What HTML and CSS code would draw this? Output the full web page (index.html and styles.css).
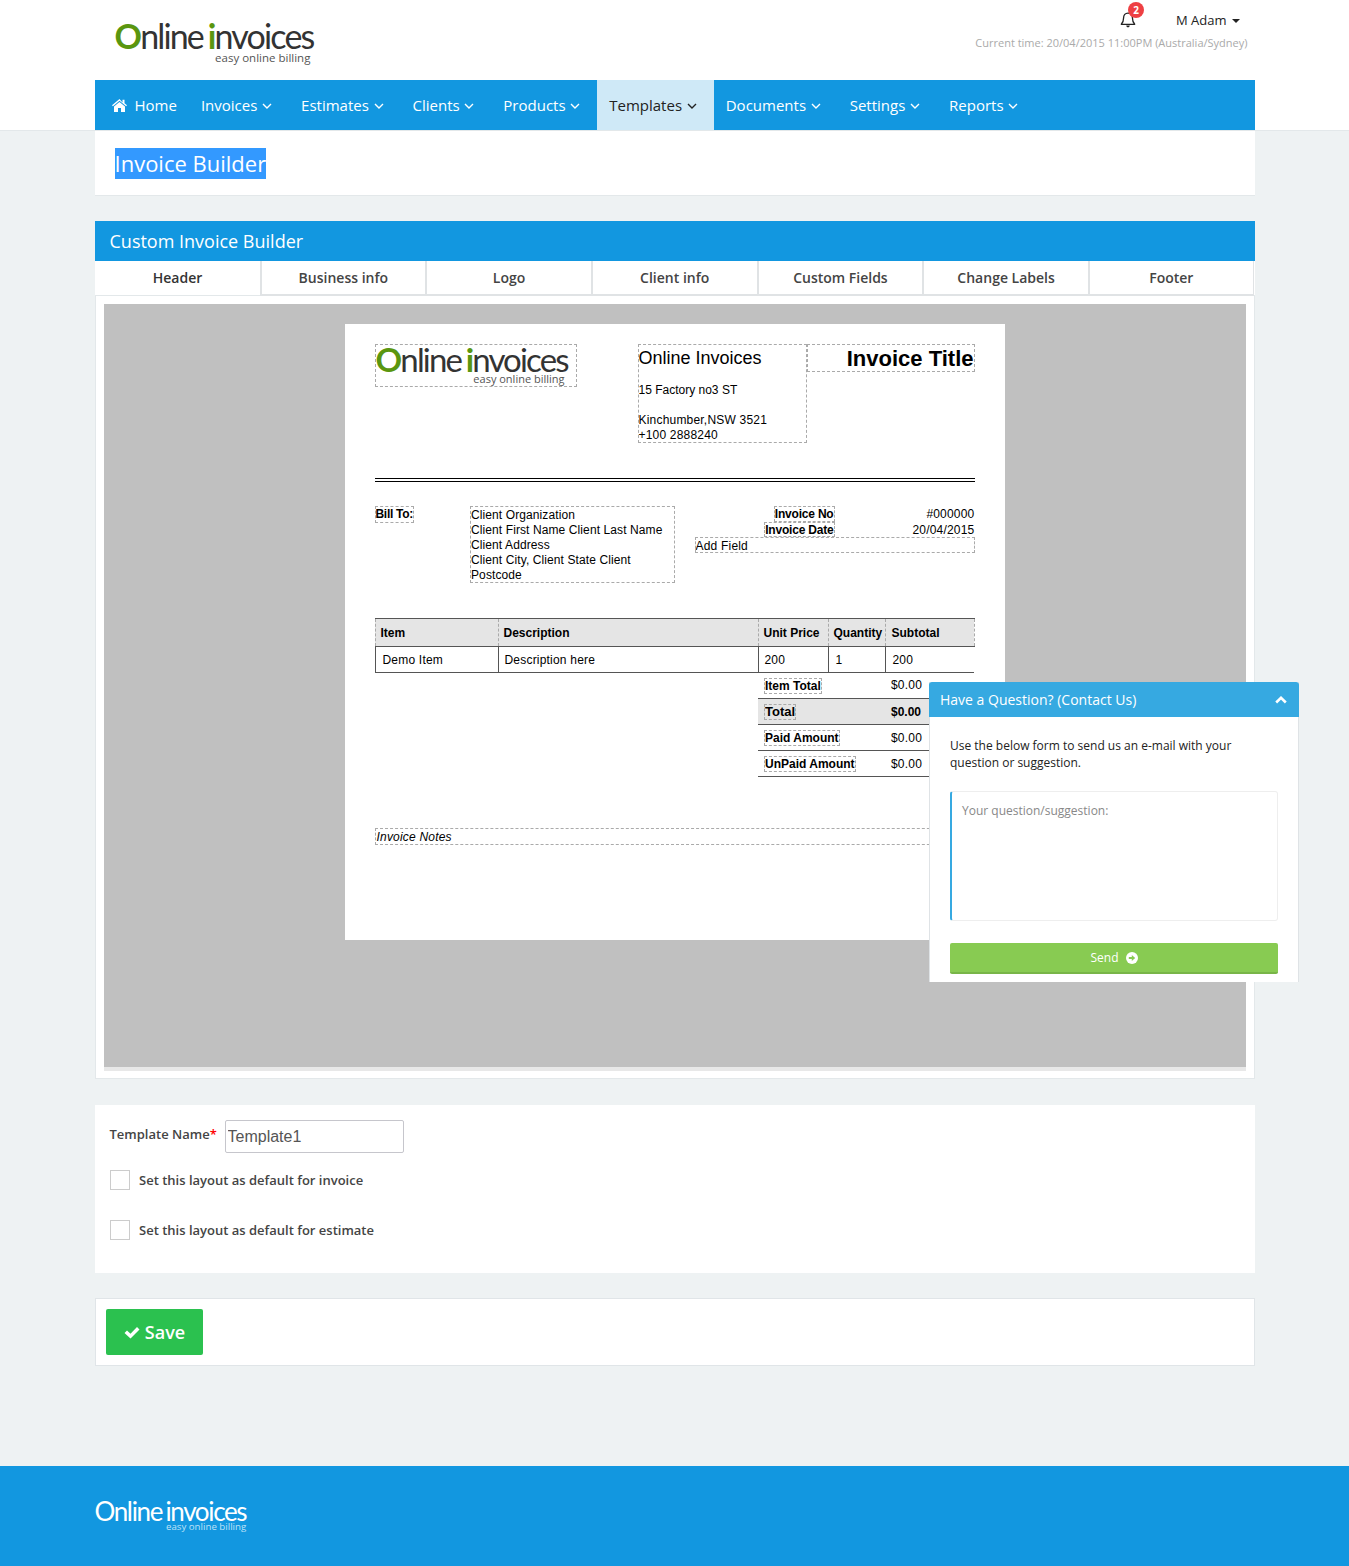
FILE: index.html
```html
<!DOCTYPE html>
<html lang="en">
<head>
<meta charset="utf-8">
<title>Invoice Builder</title>
<link rel="stylesheet" href="styles.css">
</head>
<body>
<header class="site-head">
  <div class="wrap top">
    <a class="logo logo-top"><span class="logo-name"><b>O</b>nline <b>i</b>nvoices</span><span class="logo-tag">easy online billing</span></a>
    <div class="top-right">
      <div class="user-row">
        <span class="bell">
          <svg width="18" height="18" viewBox="0 0 18 18"><path d="M9 2.2c-2.8 0-4.4 2-4.4 4.6 0 3.500-.9 5-2.300 6.500h13.400c-1.400-1.500-2.300-3-2.300-6.500C13.400 4.200 11.800 2.200 9 2.200z" fill="none" stroke="#222" stroke-width="1.300" stroke-linejoin="round"/><path d="M7.200 14.600a1.800 1.800 0 0 0 3.600 0z" fill="#222"/></svg>
          <span class="badge">2</span>
        </span>
        <span class="user">M Adam</span><span class="caret"></span>
      </div>
      <div class="clock">Current time: 20/04/2015 11:00PM (Australia/Sydney)</div>
    </div>
  </div>
  <div class="wrap">
    <nav class="nav">
      <a class="nav-item nav-home"><svg class="home-ico" width="15" height="13" viewBox="0 0 15 13"><path d="M7.500 0 0 6.300l.9 1L7.500 1.800l6.600 5.500.9-1-2.500-2.100V.8h-2v2.600z M7.500 3 2 7.600V13h4V9h3v4h4V7.600z" fill="#fff"/></svg>Home</a>
      <a class="nav-item">Invoices<svg class="chev" viewBox="0 0 10 6"><path d="M1 1l4 4 4-4"/></svg></a>
      <a class="nav-item">Estimates<svg class="chev" viewBox="0 0 10 6"><path d="M1 1l4 4 4-4"/></svg></a>
      <a class="nav-item">Clients<svg class="chev" viewBox="0 0 10 6"><path d="M1 1l4 4 4-4"/></svg></a>
      <a class="nav-item">Products<svg class="chev" viewBox="0 0 10 6"><path d="M1 1l4 4 4-4"/></svg></a>
      <a class="nav-item active">Templates<svg class="chev" viewBox="0 0 10 6"><path d="M1 1l4 4 4-4"/></svg></a>
      <a class="nav-item">Documents<svg class="chev" viewBox="0 0 10 6"><path d="M1 1l4 4 4-4"/></svg></a>
      <a class="nav-item">Settings<svg class="chev" viewBox="0 0 10 6"><path d="M1 1l4 4 4-4"/></svg></a>
      <a class="nav-item">Reports<svg class="chev" viewBox="0 0 10 6"><path d="M1 1l4 4 4-4"/></svg></a>
    </nav>
  </div>
</header>

<main class="wrap">
  <section class="title-card"><h1 class="page-title">Invoice Builder</h1></section>

  <section class="builder">
    <h2 class="builder-head">Custom Invoice Builder</h2>
    <div class="tabs">
      <a class="tab tab-active">Header</a>
      <a class="tab">Business info</a>
      <a class="tab">Logo</a>
      <a class="tab">Client info</a>
      <a class="tab">Custom Fields</a>
      <a class="tab">Change Labels</a>
      <a class="tab">Footer</a>
    </div>
    <div class="panel">
      <div class="canvas">
        <div class="sheet">
          <div class="inv-head">
            <div class="dash inv-logo"><a class="logo logo-sheet"><span class="logo-name"><b>O</b>nline <b>i</b>nvoices</span><span class="logo-tag">easy online billing</span></a></div>
            <div class="dash inv-company">
              <div class="company-name">Online Invoices</div>
              <div class="company-street">15 Factory no3 ST</div>
              <div class="company-city">Kinchumber,NSW 3521</div>
              <div>+100 2888240</div>
            </div>
            <div class="dash inv-title">Invoice Title</div>
          </div>
          <div class="inv-rule"></div>
          <div class="inv-meta">
            <div class="meta-bill"><span class="dash bill-label">Bill To:</span></div>
            <div class="dash meta-client">Client Organization<br>Client First Name Client Last Name<br>Client Address<br>Client City, Client State Client Postcode</div>
            <div class="meta-right">
              <div class="meta-row"><span class="meta-label"><span class="dash meta-key">Invoice No</span></span><span class="meta-value">#000000</span></div>
              <div class="meta-row"><span class="meta-label"><span class="dash meta-key">Invoice Date</span></span><span class="meta-value">20/04/2015</span></div>
              <div class="dash meta-add">Add Field</div>
            </div>
          </div>
          <table class="items">
            <colgroup><col class="c-item"><col class="c-desc"><col class="c-price"><col class="c-qty"><col class="c-sub"></colgroup>
            <thead><tr><th>Item</th><th>Description</th><th>Unit Price</th><th>Quantity</th><th>Subtotal</th></tr></thead>
            <tbody><tr><td>Demo Item</td><td>Description here</td><td>200</td><td>1</td><td>200</td></tr></tbody>
          </table>
          <table class="totals">
            <tr><td><span class="dash tot-key">Item Total</span></td><td class="tot-val">$0.00</td></tr>
            <tr class="tot-grand"><td><span class="dash tot-key">Total</span></td><td class="tot-val">$0.00</td></tr>
            <tr><td><span class="dash tot-key">Paid Amount</span></td><td class="tot-val">$0.00</td></tr>
            <tr><td><span class="dash tot-key">UnPaid Amount</span></td><td class="tot-val">$0.00</td></tr>
          </table>
          <div class="dash inv-notes">Invoice Notes</div>
        </div>
      </div>
      <div class="canvas-strip"></div>
    </div>
  </section>

  <section class="form-card">
    <div class="name-row">
      <label class="name-label">Template Name<span class="req">*</span></label>
      <input class="name-input" type="text" value="Template1">
    </div>
    <label class="check-row"><span class="check-box"></span>Set this layout as default for invoice</label>
    <label class="check-row"><span class="check-box"></span>Set this layout as default for estimate</label>
  </section>

  <section class="save-card">
    <button class="save-btn"><svg width="16" height="13" viewBox="0 0 16 13"><path d="M.5 7 3 4.500 6.500 7.800 13 1l2.500 2.500-9 9z" fill="#fff"/></svg>Save</button>
  </section>
</main>

<footer class="site-foot">
  <div class="wrap"><a class="logo logo-foot"><span class="logo-name">Online invoices</span><span class="logo-tag">easy online billing</span></a></div>
</footer>

<aside class="contact">
  <div class="contact-head">Have a Question? (Contact Us)<svg width="12" height="8" viewBox="0 0 12 8"><path d="M1.200 6.500 6 1.800l4.800 4.700" fill="none" stroke="#fff" stroke-width="2.600"/></svg></div>
  <div class="contact-body">
    <p class="contact-text">Use the below form to send us an e-mail with your question or suggestion.</p>
    <div class="contact-area">Your question/suggestion:</div>
    <button class="send-btn">Send<svg width="12" height="12" viewBox="0 0 12 12"><circle cx="6" cy="6" r="6" fill="#fff"/><path d="M2.800 5h3V3l3.400 3-3.400 3V7h-3z" fill="#88cb52"/></svg></button>
  </div>
</aside>
</body>
</html>
```

FILE: styles.css
```css
* { box-sizing: border-box; }
html, body { margin: 0; padding: 0; }
body {
  position: relative;
  min-height: 1566px;
  background: #eef2f3;
  font-family: "Open Sans", sans-serif;
  color: #333;
}
a { color: inherit; text-decoration: none; }
.wrap { width: 1160px; margin: 0 auto; }

/* header */
.site-head { background: #fff; border-bottom: 1px solid #e3e8ea; height: 131px; }
.top { height: 80px; display: flex; justify-content: space-between; }
.top-right { width: 300px; padding: 0 7px 0 0; text-align: right; }
.user-row { height: 35px; position: relative; display: flex; justify-content: flex-end; align-items: center; padding: 4px 8px 0 0; color: #222; font-size: 13px; }
.bell { position: relative; width: 18px; height: 18px; margin-right: 39px; }
.bell svg { display: block; }
.badge {
  position: absolute; left: 9px; top: -9px; width: 16px; height: 16px; border-radius: 50%;
  background: #ee4043; color: #fff; font-size: 10px; font-weight: 700; line-height: 16px; text-align: center;
}
.caret { width: 0; height: 0; margin-left: 5px; margin-top: 2px; border: 4px solid transparent; border-top-color: #222; border-bottom: 0; }
.clock { font-size: 11px; color: #aaa; line-height: 16px; }

/* logo */
.logo { display: inline-flex; flex-direction: column; align-items: flex-end; color: #333; }
.logo-name { font-family: Lato, sans-serif; white-space: nowrap; }
.logo-name b { color: #5a960f; font-weight: 700; }
.logo-tag { font-family: "Open Sans", sans-serif; white-space: nowrap; letter-spacing: 0; }
.logo-top { margin: 21px 0 0 20px; align-self: flex-start; }
.logo-top .logo-name { font-size: 34px; line-height: 30px; letter-spacing: -1.850px; word-spacing: -2px; }
.logo-top .logo-tag { font-size: 11.500px; line-height: 13px; margin-right: 3px; color: #555; }
.logo-sheet { display: flex; }
.logo-sheet .logo-name { align-self: flex-start; font-size: 33px; line-height: 28px; letter-spacing: -1.850px; word-spacing: -2px; }
.logo-sheet .logo-tag { font-size: 11px; line-height: 12px; margin: 0 11px 0 0; color: #555; }
.logo-foot { color: #fff; margin-top: 34px; }
.logo-foot .logo-name { font-size: 26px; line-height: 22px; letter-spacing: -1.350px; word-spacing: -2px; }
.logo-foot .logo-tag { font-size: 9.700px; line-height: 9px; color: #bfe2f7; }

/* nav */
.nav { height: 50px; background: #1297e0; display: flex; padding-left: 5px; color: #fff; font-size: 15px; }
.nav-item { display: flex; align-items: center; height: 100%; padding: 0 17px 0 12px; white-space: nowrap; }
.nav-home { padding: 0 12px 0 12px; }
.home-ico { margin-right: 8px; }
.nav-item.active { background: #cfe9f7; color: #222; }
.chev { width: 10px; height: 6px; margin-left: 4.700px; margin-top: 2px; fill: none; stroke: currentColor; stroke-width: 1.400; }

/* title */
.title-card { height: 65px; background: #fff; border-bottom: 1px solid #e3e8ea; padding: 17px 20px 0; }
.page-title { display: inline-block; margin: 0; height: 31px; background: #3399ff; color: #fff; font-size: 22px; font-weight: 400; line-height: 31px; white-space: nowrap; }

/* builder */
.builder { margin-top: 25px; }
.builder-head { height: 40px; margin: 0; padding: 0 15px; background: #1297e0; color: #fff; font-size: 18px; font-weight: 400; line-height: 41px; }
.tabs { display: grid; grid-template-columns: 165px repeat(6, 165.700px); height: 34px; background: #fff; }
.tab { display: block; text-align: center; font-size: 14px; font-weight: 600; line-height: 33px; color: #444; border-left: 2px solid #e0e3e5; border-bottom: 2px solid #e0e3e5; }
.tab:last-child { border-right: 1px solid #e0e3e5; }
.tab-active { border-left: 0; border-bottom: 0; padding-left: 1px; color: #333; }
.panel { height: 784px; background: #fff; border: 1px solid #e3e8ea; padding: 8px 8px 0; }
.canvas { height: 763px; background: #c0c0c0; padding-top: 20px; }
.canvas-strip { height: 4px; background: #e8e8e8; }

/* invoice sheet */
.sheet {
  width: 660px; height: 616px; margin: 0 auto; padding: 20px 30px 0; background: #fff;
  font-family: "Liberation Sans", Arial, sans-serif; font-size: 12px; line-height: 15px; color: #000; letter-spacing: .2px;
}
.dash { border: 1px dashed #aaa; }
.inv-head { display: flex; align-items: flex-start; height: 134px; }
.inv-logo { width: 202px; height: 43px; margin-right: 61px; }
.inv-company { width: 169px; height: 99px; }
.company-name { font-size: 18px; line-height: 26px; margin-bottom: 12px; letter-spacing: 0; }
.company-street { margin-bottom: 15px; height: 15px; letter-spacing: 0; }
.company-city { height: 15px; margin-top: 15px; }
.inv-title { width: 168px; height: 28px; margin-left: 0; text-align: right; font-size: 22px; font-weight: 700; line-height: 27px; letter-spacing: 0; }
.inv-rule { height: 3.500px; border-top: 1px solid #000; border-bottom: 1px solid #000; }
.inv-meta { display: flex; align-items: flex-start; margin-top: 24.500px; height: 112px; }
.meta-bill { width: 95px; }
.bill-label { display: inline-block; font-weight: 700; line-height: 15px; letter-spacing: -.3px; }
.meta-client { width: 205px; height: 77px; padding: 1px 0 0 .5px; letter-spacing: .1px; }
.meta-right { width: 280px; margin-left: 20px; }
.meta-row { display: flex; height: 15.500px; line-height: 16px; }
.meta-label { width: 140px; text-align: right; font-weight: 700; }
.meta-key { display: inline-block; line-height: 13.500px; padding-top: 1px; height: 15.500px; letter-spacing: -.2px; vertical-align: top; }
.meta-value { width: 140px; text-align: right; }
.meta-add { height: 16px; line-height: 15px; padding-top: 1px; }

.items { width: 599px; border-collapse: collapse; table-layout: fixed; }
.c-item { width: 123px; } .c-desc { width: 260px; } .c-price { width: 70px; } .c-qty { width: 57px; } .c-sub { width: 89px; }
.items th { height: 28px; padding: 1px 0 0 5px; background: #e5e5e5; text-align: left; font-weight: 700; letter-spacing: 0; border-top: 1px solid #555; border-bottom: 1px solid #555; border-left: 1px dashed #aaa; border-right: 1px dashed #aaa; }
.items th:last-child { padding-left: 6px; }
.items td { height: 26px; padding: 2px 6px 0; border: 1px solid #555; border-top: 0; }
.items td:first-child, .items td:nth-child(4), .items td:last-child { padding-left: 7px; }
.items td:last-child { border-right: 0; }
.totals { width: 217px; margin: -1px 0 0 383px; border-collapse: collapse; table-layout: fixed; }
.totals td { height: 26px; padding: 2px 6.500px 0; border-bottom: 1px solid #555; }
.tot-key { display: inline-block; font-weight: 700; line-height: 14px; letter-spacing: 0; }
.tot-val { width: 90px; }
.tot-grand td { background: #e5e5e5; font-weight: 700; }
.tot-grand { font-size: 13px; }
.tot-grand .tot-val { font-size: 12px; letter-spacing: 0; }
.inv-notes { margin-top: 51px; height: 17px; padding-left: 1px; line-height: 16px; font-style: italic; }

/* form */
.form-card { height: 168px; margin-top: 26px; padding: 15px; background: #fff; }
.name-row { display: flex; align-items: flex-start; height: 34px; }
.name-label { width: 115px; font-size: 13px; font-weight: 600; line-height: 29px; color: #444; }
.req { color: #f00; }
.name-input { width: 179px; height: 33px; padding: 1px 2px 0; border: 1px solid #c6c6cc; border-radius: 2px; font-family: "Liberation Sans", sans-serif; font-size: 16px; color: #555; outline: 0; }
.check-row { display: flex; align-items: center; height: 20px; margin-top: 30px; font-size: 13px; font-weight: 600; color: #444; }
.name-row + .check-row { margin-top: 16px; }
.check-box { width: 20px; height: 20px; margin-right: 9.500px; background: #fff; border: 1px solid #ccc; }

.save-card { height: 68px; margin-top: 25px; padding: 10px; background: #fff; border: 1px solid #e0e5e8; }
.save-btn { display: flex; align-items: center; justify-content: center; gap: 5px; width: 97px; height: 46px; padding: 0 0 0 1px; border: 0; border-radius: 2px; background: #2bc14f; color: #fff; font-family: "Open Sans", sans-serif; font-size: 18px; font-weight: 600; }

/* footer */
.site-foot { position: absolute; left: 0; right: 0; top: 1466px; height: 100px; background: #1297e0; }

/* contact widget */
.contact { position: absolute; left: 929px; top: 682px; width: 370px; height: 300px; background: #fff; border: 1px solid #dfe3e6; border-width: 0 1px; }
.contact-head { display: flex; justify-content: space-between; align-items: center; height: 35px; margin: 0 -1px; padding: 0 12px 0 11px; background: #36a9e1; color: #fff; font-size: 14px; border-radius: 3px 3px 0 0; }
.contact-body { padding: 0 20px; }
.contact-text { margin: 20px 0 20px; font-size: 12px; line-height: 17px; color: #222; }
.contact-area { height: 130px; padding: 10px; border: 1px solid #eee; border-left: 2px solid #36a9e1; border-radius: 3px; font-size: 12px; line-height: 17px; color: #888; }
.send-btn { display: flex; align-items: center; justify-content: center; gap: 7px; width: 100%; height: 31px; margin-top: 22px; padding: 0; border: 0; border-bottom: 2px solid #78b548; border-radius: 2px; background: #88cb52; color: #fff; font-family: "Open Sans", sans-serif; font-size: 12px; }
```
